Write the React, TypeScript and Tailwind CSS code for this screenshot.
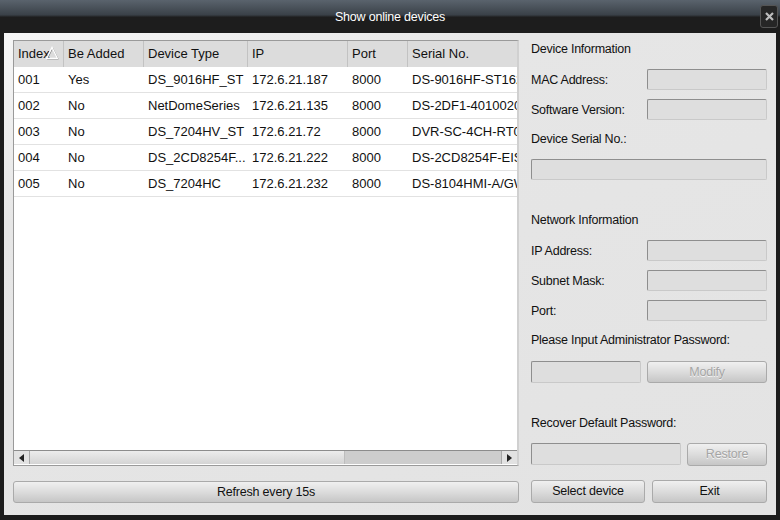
import React from "react"

const rows = [
  ["001", "Yes", "DS_9016HF_ST", "172.6.21.187", "8000", "DS-9016HF-ST1620130822BBRR"],
  ["002", "No", "NetDomeSeries", "172.6.21.135", "8000", "DS-2DF1-401002013"],
  ["003", "No", "DS_7204HV_ST", "172.6.21.72", "8000", "DVR-SC-4CH-RT0120"],
  ["004", "No", "DS_2CD8254F...", "172.6.21.222", "8000", "DS-2CD8254F-EIS0120"],
  ["005", "No", "DS_7204HC", "172.6.21.232", "8000", "DS-8104HMI-A/GW0120"],
]

const cols = [
  { name: "Index", w: "w-[50px]" },
  { name: "Be Added", w: "w-[80px]" },
  { name: "Device Type", w: "w-[104px]" },
  { name: "IP", w: "w-[100px]" },
  { name: "Port", w: "w-[60px]" },
  { name: "Serial No.", w: "w-[120px]" },
]

function Field({ className = "" }: { className?: string }) {
  return (
    <div
      className={`h-[21px] shrink-0 rounded-[2px] border border-t-[#8e8e8e] border-l-[#8e8e8e] border-r-[#c9c9c9] border-b-[#c9c9c9] bg-[#dedede] ${className}`}
    />
  )
}

function Btn({ children, disabled = false, className = "" }: { children: React.ReactNode; disabled?: boolean; className?: string }) {
  return (
    <button
      className={`flex items-center justify-center rounded-[3px] border border-[#aaaaaa] bg-[linear-gradient(to_bottom,#f0f0f0,#dcdcdc_50%,#c6c6c6)] text-[12.5px] tracking-[-0.2px] ${
        disabled ? "text-[#a5a5a5] [text-shadow:0_1px_0_#f4f4f4]" : "text-[#111]"
      } ${className}`}
    >
      {children}
    </button>
  )
}

function Row({ label }: { label: string }) {
  return (
    <div className="flex h-[21px] items-center justify-between">
      <span className="whitespace-nowrap pt-[1px]">{label}</span>
      <Field className="w-[120px]" />
    </div>
  )
}

export default function App() {
  return (
    <div className="flex h-[520px] w-[780px] flex-col bg-[#1c1c1c] font-['Liberation_Sans',Arial,sans-serif] text-[13px] text-[#111]">
      <div className="relative flex h-[33px] shrink-0 items-center justify-center bg-[linear-gradient(to_bottom,#5a636d_0%,#3a4148_45%,#1d1d1d_52%,#1d1d1d_100%)]">
        <span className="pt-[1px] text-[12.5px] tracking-[-0.2px] text-white">Show online devices</span>
        <div className="absolute right-[2px] top-[5px] flex h-[23px] w-[18px] items-center justify-center rounded-[3px] border border-[#555] bg-[#262626]">
          <svg width="9" height="9" viewBox="0 0 9 9">
            <path d="M1 1 L8 8 M8 1 L1 8" stroke="#bdbdbd" strokeWidth="2.2" />
          </svg>
        </div>
      </div>

      <div className="mx-[4px] mb-[5px] flex flex-1 bg-[linear-gradient(160deg,#f6f6f6,#e6e6e6_25%,#e3e3e3)] pl-[9px] pr-[8px] pt-[7px] pb-[12px]">
        {/* left */}
        <div className="flex w-[506px] flex-col">
          <div className="flex h-[426px] flex-col overflow-hidden border border-[#9a9a9a] border-r-[2px] border-r-[#d0d0d0] bg-white">
            <div className="flex h-[26px] shrink-0 bg-[#dcdcdc]">
              {cols.map((c, i) => (
                <div
                  key={c.name}
                  className={`relative flex shrink-0 items-center pl-[4px] ${c.w} ${i < cols.length - 1 ? "border-r border-[#c2c2c2]" : ""}`}
                >
                  {c.name}
                  {i === 0 && (
                    <svg className="absolute left-[31px] top-[5px]" width="14" height="14" viewBox="0 0 14 14">
                      <path d="M7 1.5 L12.5 12.5 L1.5 12.5 Z" fill="none" stroke="#8a8a8a" strokeWidth="1" transform="translate(0.7,0.7)" />
                      <path d="M7 1.5 L12.5 12.5 L1.5 12.5 Z" fill="none" stroke="#ffffff" strokeWidth="1.3" />
                    </svg>
                  )}
                </div>
              ))}
            </div>
            {rows.map((r) => (
              <div key={r[0]} className="flex h-[26px] shrink-0 border-b border-[#e2e2e2]">
                {r.map((v, i) => (
                  <div key={i} className={`flex shrink-0 items-center overflow-hidden whitespace-nowrap pl-[4px] ${cols[i].w}`}>
                    {v}
                  </div>
                ))}
              </div>
            ))}
            <div className="flex-1" />
            <div className="mb-[1px] flex h-[14px] shrink-0 border-t border-[#8c8c8c] bg-[#cdcdcd]">
              <div className="flex w-[16px] items-center justify-center border-r border-[#a8a8a8] bg-[#e2e2e2]">
                <svg width="5" height="8" viewBox="0 0 5 8">
                  <path d="M5 0 L0 4 L5 8 Z" fill="#222" />
                </svg>
              </div>
              <div className="w-[315px] border-r border-[#bdbdbd] bg-[linear-gradient(to_bottom,#ececec,#d4d4d4)]" />
              <div className="flex-1" />
              <div className="flex w-[16px] items-center justify-center border-l border-[#a8a8a8] bg-[#e2e2e2]">
                <svg width="5" height="8" viewBox="0 0 5 8">
                  <path d="M0 0 L5 4 L0 8 Z" fill="#222" />
                </svg>
              </div>
            </div>
          </div>
          <Btn className="mt-[15px] h-[22px] w-full">Refresh every 15s</Btn>
        </div>

        {/* right */}
        <div className="ml-[12px] flex w-[236px] flex-col text-[12.5px] tracking-[-0.25px]">
          <div className="flex h-[18px] items-center pt-[1px]">Device Information</div>
          <div className="mt-[11px]"><Row label="MAC Address:" /></div>
          <div className="mt-[9px]"><Row label="Software Version:" /></div>
          <div className="mt-[10px] flex h-[18px] items-center pt-[1px]">Device Serial No.:</div>
          <Field className="mt-[11px] w-full" />
          <div className="mt-[31px] flex h-[18px] items-center pt-[1px]">Network Information</div>
          <div className="mt-[11px]"><Row label="IP Address:" /></div>
          <div className="mt-[9px]"><Row label="Subnet Mask:" /></div>
          <div className="mt-[9px]"><Row label="Port:" /></div>
          <div className="mt-[10px] flex h-[18px] items-center whitespace-nowrap pt-[1px]">Please Input Administrator Password:</div>
          <div className="mt-[12px] flex h-[22px] justify-between">
            <Field className="h-[22px] w-[110px]" />
            <Btn disabled className="h-[22px] w-[120px]">Modify</Btn>
          </div>
          <div className="mt-[31px] flex h-[18px] items-center pt-[1px]">Recover Default Password:</div>
          <div className="mt-[11px] flex h-[22px] justify-between">
            <Field className="h-[22px] w-[150px]" />
            <Btn disabled className="h-[23px] w-[80px]">Restore</Btn>
          </div>
          <div className="mt-auto flex h-[23px] justify-between">
            <Btn className="h-[23px] w-[114px]">Select device</Btn>
            <Btn className="h-[23px] w-[115px]">Exit</Btn>
          </div>
        </div>
      </div>
    </div>
  )
}
